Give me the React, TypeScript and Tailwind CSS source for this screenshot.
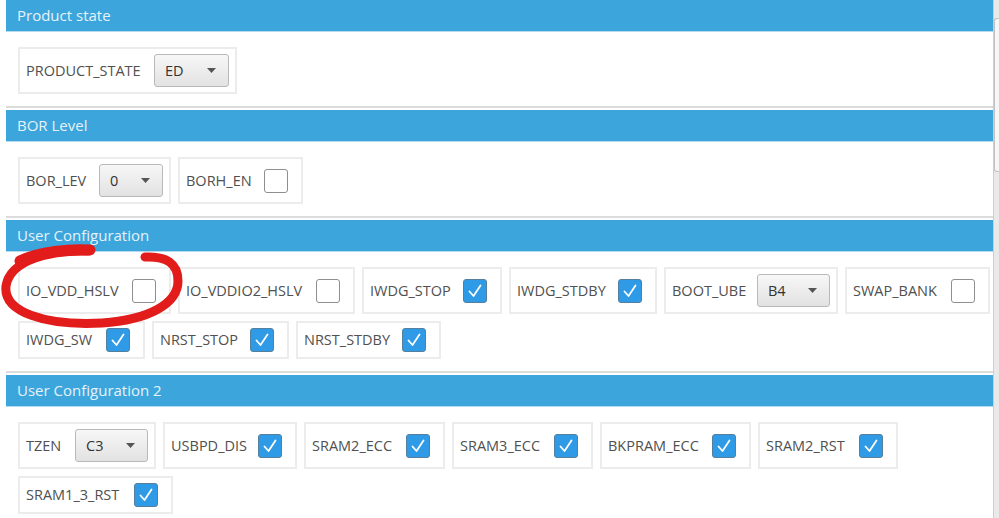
import React from 'react';

type Item =
  | { label: string; kind: 'select'; value: string; w: string; sw: string }
  | { label: string; kind: 'check'; checked: boolean; w: string };

const sections: { title: string; items: Item[] }[] = [
  {
    title: 'Product state',
    items: [{ label: 'PRODUCT_STATE', kind: 'select', value: 'ED', w: 'w-[219px]', sw: 'w-[75px]' }],
  },
  {
    title: 'BOR Level',
    items: [
      { label: 'BOR_LEV', kind: 'select', value: '0', w: 'w-[153px]', sw: 'w-[64px]' },
      { label: 'BORH_EN', kind: 'check', checked: false, w: 'w-[125px]' },
    ],
  },
  {
    title: 'User Configuration',
    items: [
      { label: 'IO_VDD_HSLV', kind: 'check', checked: false, w: 'w-[153px]' },
      { label: 'IO_VDDIO2_HSLV', kind: 'check', checked: false, w: 'w-[177px]' },
      { label: 'IWDG_STOP', kind: 'check', checked: true, w: 'w-[140px]' },
      { label: 'IWDG_STDBY', kind: 'check', checked: true, w: 'w-[148px]' },
      { label: 'BOOT_UBE', kind: 'select', value: 'B4', w: 'w-[174px]', sw: 'w-[73px]' },
      { label: 'SWAP_BANK', kind: 'check', checked: false, w: 'w-[145px]' },
      { label: 'IWDG_SW', kind: 'check', checked: true, w: 'w-[127px]' },
      { label: 'NRST_STOP', kind: 'check', checked: true, w: 'w-[137px]' },
      { label: 'NRST_STDBY', kind: 'check', checked: true, w: 'w-[145px]' },
    ],
  },
  {
    title: 'User Configuration 2',
    items: [
      { label: 'TZEN', kind: 'select', value: 'C3', w: 'w-[138px]', sw: 'w-[73px]' },
      { label: 'USBPD_DIS', kind: 'check', checked: true, w: 'w-[134px]' },
      { label: 'SRAM2_ECC', kind: 'check', checked: true, w: 'w-[141px]' },
      { label: 'SRAM3_ECC', kind: 'check', checked: true, w: 'w-[141px]' },
      { label: 'BKPRAM_ECC', kind: 'check', checked: true, w: 'w-[151px]' },
      { label: 'SRAM2_RST', kind: 'check', checked: true, w: 'w-[140px]' },
      { label: 'SRAM1_3_RST', kind: 'check', checked: true, w: 'w-[155px]' },
    ],
  },
];

const Select: React.FC<{ value: string; sw: string }> = ({ value, sw }) => (
  <div className={`${sw} ml-auto mr-[1px] h-[33px] shrink-0 rounded-[3px] border border-[#b9b9b9] bg-gradient-to-b from-[#f7f7f7] to-[#e2e2e2] flex items-center justify-between pl-[10px] pr-[12px] text-[#333]`}>
    <span>{value}</span>
    <svg width="9" height="5" viewBox="0 0 9 5">
      <path d="M0 0 L9 0 L4.5 5 Z" fill="#555" />
    </svg>
  </div>
);

const Checkbox: React.FC<{ checked: boolean }> = ({ checked }) =>
  checked ? (
    <div className="ml-auto mr-[8px] w-[24px] h-[24px] shrink-0 rounded-[3px] border border-[#567f9e] bg-[#2f9be6] flex items-center justify-center">
      <svg width="18" height="18" viewBox="0 0 18 18">
        <path d="M3.5 9.5 L7.5 14 L14.5 3.5" stroke="#fff" strokeWidth="1.8" fill="none" strokeLinecap="round" strokeLinejoin="round" />
      </svg>
    </div>
  ) : (
    <div className="ml-auto mr-[8px] w-[24px] h-[24px] shrink-0 rounded-[3px] border-[1.5px] border-[#8f8f8f] bg-white" />
  );

const Field: React.FC<{ item: Item }> = ({ item }) => (
  <div className={`${item.w} flex items-center border-2 border-[#ececec] pl-[6px] pr-[5px] py-[5px] bg-white`}>
    <span className="text-[#505050] whitespace-nowrap">{item.label}</span>
    {item.kind === 'select' ? <Select value={item.value} sw={item.sw} /> : <Checkbox checked={item.checked} />}
  </div>
);

export default function App() {
  return (
    <div className="relative w-[999px] h-[518px] overflow-hidden bg-white flex font-['Open_Sans',sans-serif] text-[14.5px]">
      <div className="flex-1 pl-[6px]">
        {sections.map((s) => (
          <div key={s.title}>
            <div className="h-[32px] bg-[#3ca5db] border-b border-[#b6dbef] flex items-center pl-[11px] text-[15px] text-[#e6f2f9]">
              {s.title}
            </div>
            <div className="pt-[15px] pb-[12px] pl-[12px] flex flex-wrap gap-x-[7px] gap-y-[7px]">
              {s.items.map((it) => (
                <Field key={it.label} item={it} />
              ))}
            </div>
            <div className="h-[2px] bg-[#dcdcdc] mb-[2px]" />
          </div>
        ))}
      </div>

      {/* scrollbar */}
      <div className="w-[6px] border-l border-[#cdcdcd] bg-[#e9e9e9]">
        <div className="mt-[18px] h-[154px] rounded-l-[3px] border border-r-0 border-[#c2c2c2] bg-[#f6f6f6]" />
      </div>

      {/* red marker annotation */}
      <svg className="absolute left-0 top-0 pointer-events-none" width="999" height="518">
        <path
          d="M88 251 C50 250 10 260 6 286 C3 312 45 326 102 323 C148 320 178 304 178 281 C178 263 166 256 145 257"
          stroke="#e21b1b"
          strokeWidth="9"
          fill="none"
          strokeLinecap="round"
        />
        <path d="M90 250 C70 249 40 251 20 261" stroke="#e21b1b" strokeWidth="11" fill="none" strokeLinecap="round" />
      </svg>
    </div>
  );
}
